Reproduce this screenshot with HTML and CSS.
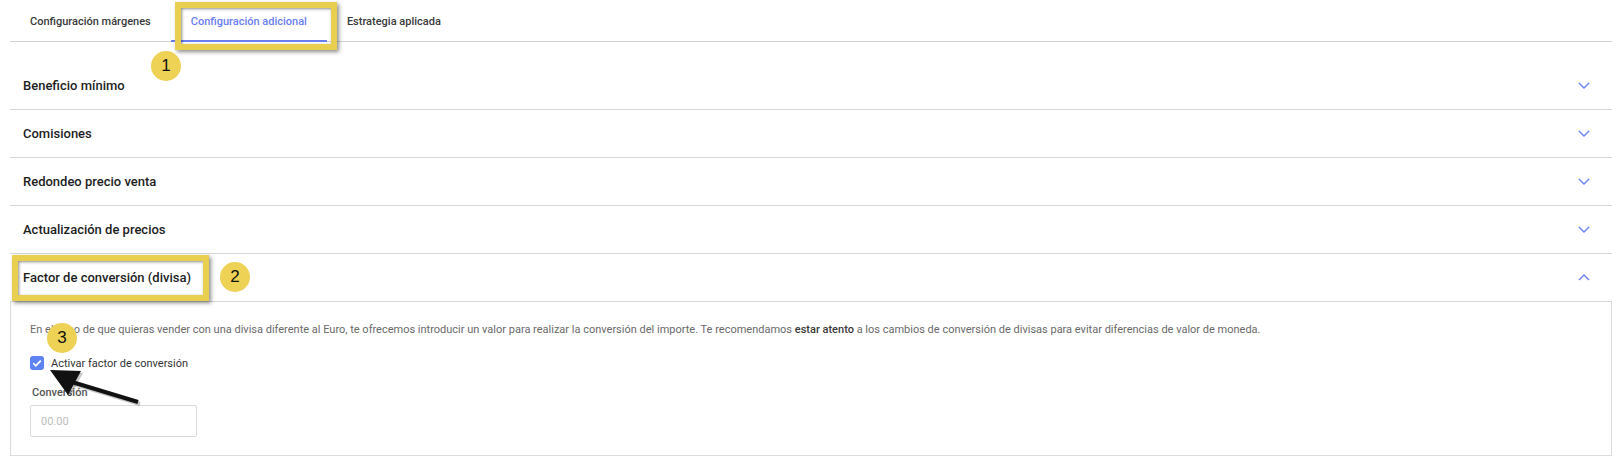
FILE: index.html
```html
<!DOCTYPE html>
<html lang="es">
<head>
<meta charset="utf-8">
<title>Configuración</title>
<link rel="stylesheet" href="styles.css">
</head>
<body>
<div class="page">
  <nav class="tabs">
    <div class="tab">Configuración márgenes</div>
    <div class="tab active">Configuración adicional</div>
    <div class="tab">Estrategia aplicada</div>
  </nav>

  <div class="accordion">
    <div class="item">
      <div class="head"><span>Beneficio mínimo</span><svg class="chev" viewBox="0 0 12 7"><path d="M1 1l5 5 5-5"/></svg></div>
    </div>
    <div class="item">
      <div class="head"><span>Comisiones</span><svg class="chev" viewBox="0 0 12 7"><path d="M1 1l5 5 5-5"/></svg></div>
    </div>
    <div class="item">
      <div class="head"><span>Redondeo precio venta</span><svg class="chev" viewBox="0 0 12 7"><path d="M1 1l5 5 5-5"/></svg></div>
    </div>
    <div class="item">
      <div class="head"><span>Actualización de precios</span><svg class="chev" viewBox="0 0 12 7"><path d="M1 1l5 5 5-5"/></svg></div>
    </div>
    <div class="item open">
      <div class="head"><span>Factor de conversión (divisa)</span><svg class="chev" viewBox="0 0 12 7"><path d="M1 6l5-5 5 5"/></svg></div>
      <div class="body">
        <p class="desc">En el caso de que quieras vender con una divisa diferente al Euro, te ofrecemos introducir un valor para realizar la conversión del importe. Te recomendamos <b>estar atento</b> a los cambios de conversión de divisas para evitar diferencias de valor de moneda.</p>
        <label class="check"><span class="box"><svg viewBox="0 0 14 14"><path d="M3.2 7.2l2.6 2.6 5-5.2"/></svg></span>Activar factor de conversión</label>
        <div class="field">
          <div class="label">Conversión</div>
          <div class="input">00.00</div>
        </div>
      </div>
    </div>
  </div>

  <div class="hl hl1"></div>
  <div class="hl hl2"></div>
  <div class="badge b1">1</div>
  <div class="badge b2">2</div>
  <div class="badge b3">3</div>
  <svg class="arrow" viewBox="0 0 160 80" width="160" height="80">
    <g class="arrow-shadow"><path d="M140 84 L74 64" /><polygon points="52,52 83,53 70,77"/></g>
    <path d="M138 82 L72 62" class="shaft"/>
    <polygon points="50,50 81,51 68,75" class="headp"/>
  </svg>
</div>
</body>
</html>
```

FILE: styles.css
```css
* { box-sizing: border-box; }
html, body { margin: 0; padding: 0; background: #fff; }
body { font-family: Roboto, "Noto Sans", Arial, sans-serif; color: #222; width: 1620px; height: 461px; overflow: hidden; }

.page { position: relative; padding: 0 8px 0 10px; }

.tabs { display: flex; height: 42px; border-bottom: 1px solid #d2d2d2; }
.tab { padding: 2px 20px 0; font-size: 11px; font-weight: 500; color: #3a3a3a; display: flex; align-items: center; height: 41px; }
.tab.active { color: #6a7ef2; border-bottom: 2px solid #6a7ef2; height: 42px; margin-bottom: -1px; }

.accordion { padding-top: 20px; }
.item { border-bottom: 1px solid #d6d6d6; }
.item.open { border-bottom: none; }
.head { height: 47px; display: flex; align-items: center; justify-content: space-between; padding: 0 22px 0 13px; font-size: 13px; font-weight: 500; color: #1e1e1e; }
.item.open .head { height: 48px; border-bottom: 1px solid #d6d6d6; }
.chev { width: 12px; height: 7px; fill: none; stroke: #6b7ff5; stroke-width: 1.4; }

.body { border: 1px solid #dcdcdc; border-top: none; padding: 21px 19px 18px; }
.desc { margin: 0; font-size: 11px; color: #6a6a6a; line-height: 14px; }
.desc b { font-weight: 500; color: #3a3a3a; }

.check { display: flex; align-items: center; gap: 7px; margin-top: 19px; font-size: 11px; color: #333; height: 14px; }
.box { width: 14px; height: 14px; border-radius: 3px; background: #5f82f2; display: flex; }
.box svg { width: 14px; height: 14px; fill: none; stroke: #fff; stroke-width: 1.8; }

.field { margin-top: 16px; }
.label { font-size: 11px; font-weight: 500; color: #555; padding-left: 2px; line-height: 14px; }
.input { margin-top: 5px; width: 167px; height: 32px; border: 1px solid #dadada; border-radius: 2px; font-size: 11px; color: #bdbdbd; padding-left: 10px; display: flex; align-items: center; }

.hl { position: absolute; border: 6px solid #e9cf4f; box-shadow: 2px 2px 4px rgba(0,0,0,0.45), inset 1px 1px 3px rgba(0,0,0,0.45); }
.hl1 { left: 175px; top: 2px; width: 162px; height: 48px; }
.hl2 { left: 12px; top: 255px; width: 197px; height: 46px; }

.badge { position: absolute; width: 30px; height: 30px; border-radius: 50%; background: #edd255; color: #111; font-size: 17px; display: flex; align-items: center; justify-content: center; font-family: "Liberation Sans", Arial, sans-serif; }
.b1 { left: 151px; top: 51px; }
.b2 { left: 220px; top: 262px; }
.b3 { left: 47px; top: 323px; }

.arrow { position: absolute; left: 0; top: 320px; overflow: visible; }
.shaft { stroke: #111; stroke-width: 4; }
.headp { fill: #111; }
.arrow-shadow path { stroke: rgba(0,0,0,0.22); stroke-width: 4; }
.arrow-shadow polygon { fill: rgba(0,0,0,0.22); }
```
